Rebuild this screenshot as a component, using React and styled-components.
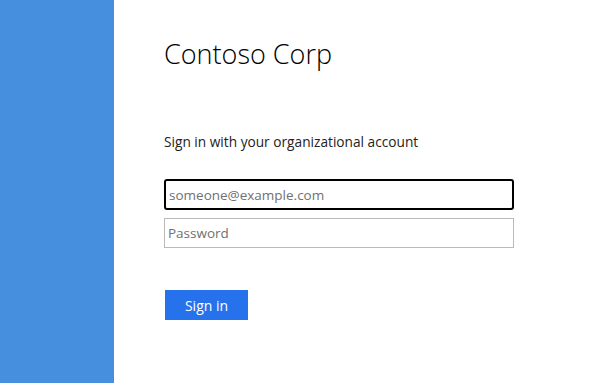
import React, { useState } from 'react'
import styled, { createGlobalStyle } from 'styled-components'

const GlobalStyle = createGlobalStyle`
  html, body {
    margin: 0;
    padding: 0;
    height: 100%;
    background: #fff;
  }
  #root {
    height: 100%;
  }
`;

const Page = styled.div`
  display: flex;
  width: 100vw;
  height: 100vh;
  font-family: "Segoe UI", "Open Sans", "Noto Sans", sans-serif;
`;

const SidePanel = styled.div`
  width: 114px;
  flex-shrink: 0;
  background-color: #468fde;
`;

const Content = styled.div`
  flex: 1;
  padding: 35px 0 0 50px;
`;

const Title = styled.h1`
  margin: 0;
  font-size: 27px;
  font-weight: 300;
  color: #000;
  line-height: 38px;
`;

const Prompt = styled.p`
  margin: 60px 0 0 0;
  font-size: 13.7px;
  color: #222;
  line-height: 18px;
`;

const Form = styled.form`
  display: flex;
  flex-direction: column;
  gap: 8px;
  margin-top: 28px;
  width: 350px;
`;

const Input = styled.input`
  box-sizing: border-box;
  height: ${(p) => (p.$focused ? '31px' : '30px')};
  padding: 0 3px;
  font-family: inherit;
  font-size: 13.5px;
  color: #222;
  border: ${(p) => (p.$focused ? '2px solid #000' : '1px solid #bababa')};
  border-radius: ${(p) => (p.$focused ? '3px' : '0')};
  outline: none;
  &::placeholder {
    color: #707070;
  }
`;

const Button = styled.button`
  align-self: flex-start;
  margin: 34px 0 0 1px;
  width: 83px;
  height: 30px;
  border: none;
  background-color: #2672ec;
  color: #fff;
  font-family: inherit;
  font-size: 14px;
  cursor: pointer;
`;

function App() {
  const [email, setEmail] = useState('');
  const [password, setPassword] = useState('');

  return (
    <Page>
      <GlobalStyle />
      <SidePanel />
      <Content>
        <Title>Contoso Corp</Title>
        <Prompt>Sign in with your organizational account</Prompt>
        <Form onSubmit={(e) => e.preventDefault()}>
          <Input $focused value={email} placeholder="someone@example.com" onChange={(e) => setEmail(e.target.value)} />
          <Input type="password" value={password} placeholder="Password" onChange={(e) => setPassword(e.target.value)} />
          <Button type="submit">Sign in</Button>
        </Form>
      </Content>
    </Page>
  )
}

export default App
